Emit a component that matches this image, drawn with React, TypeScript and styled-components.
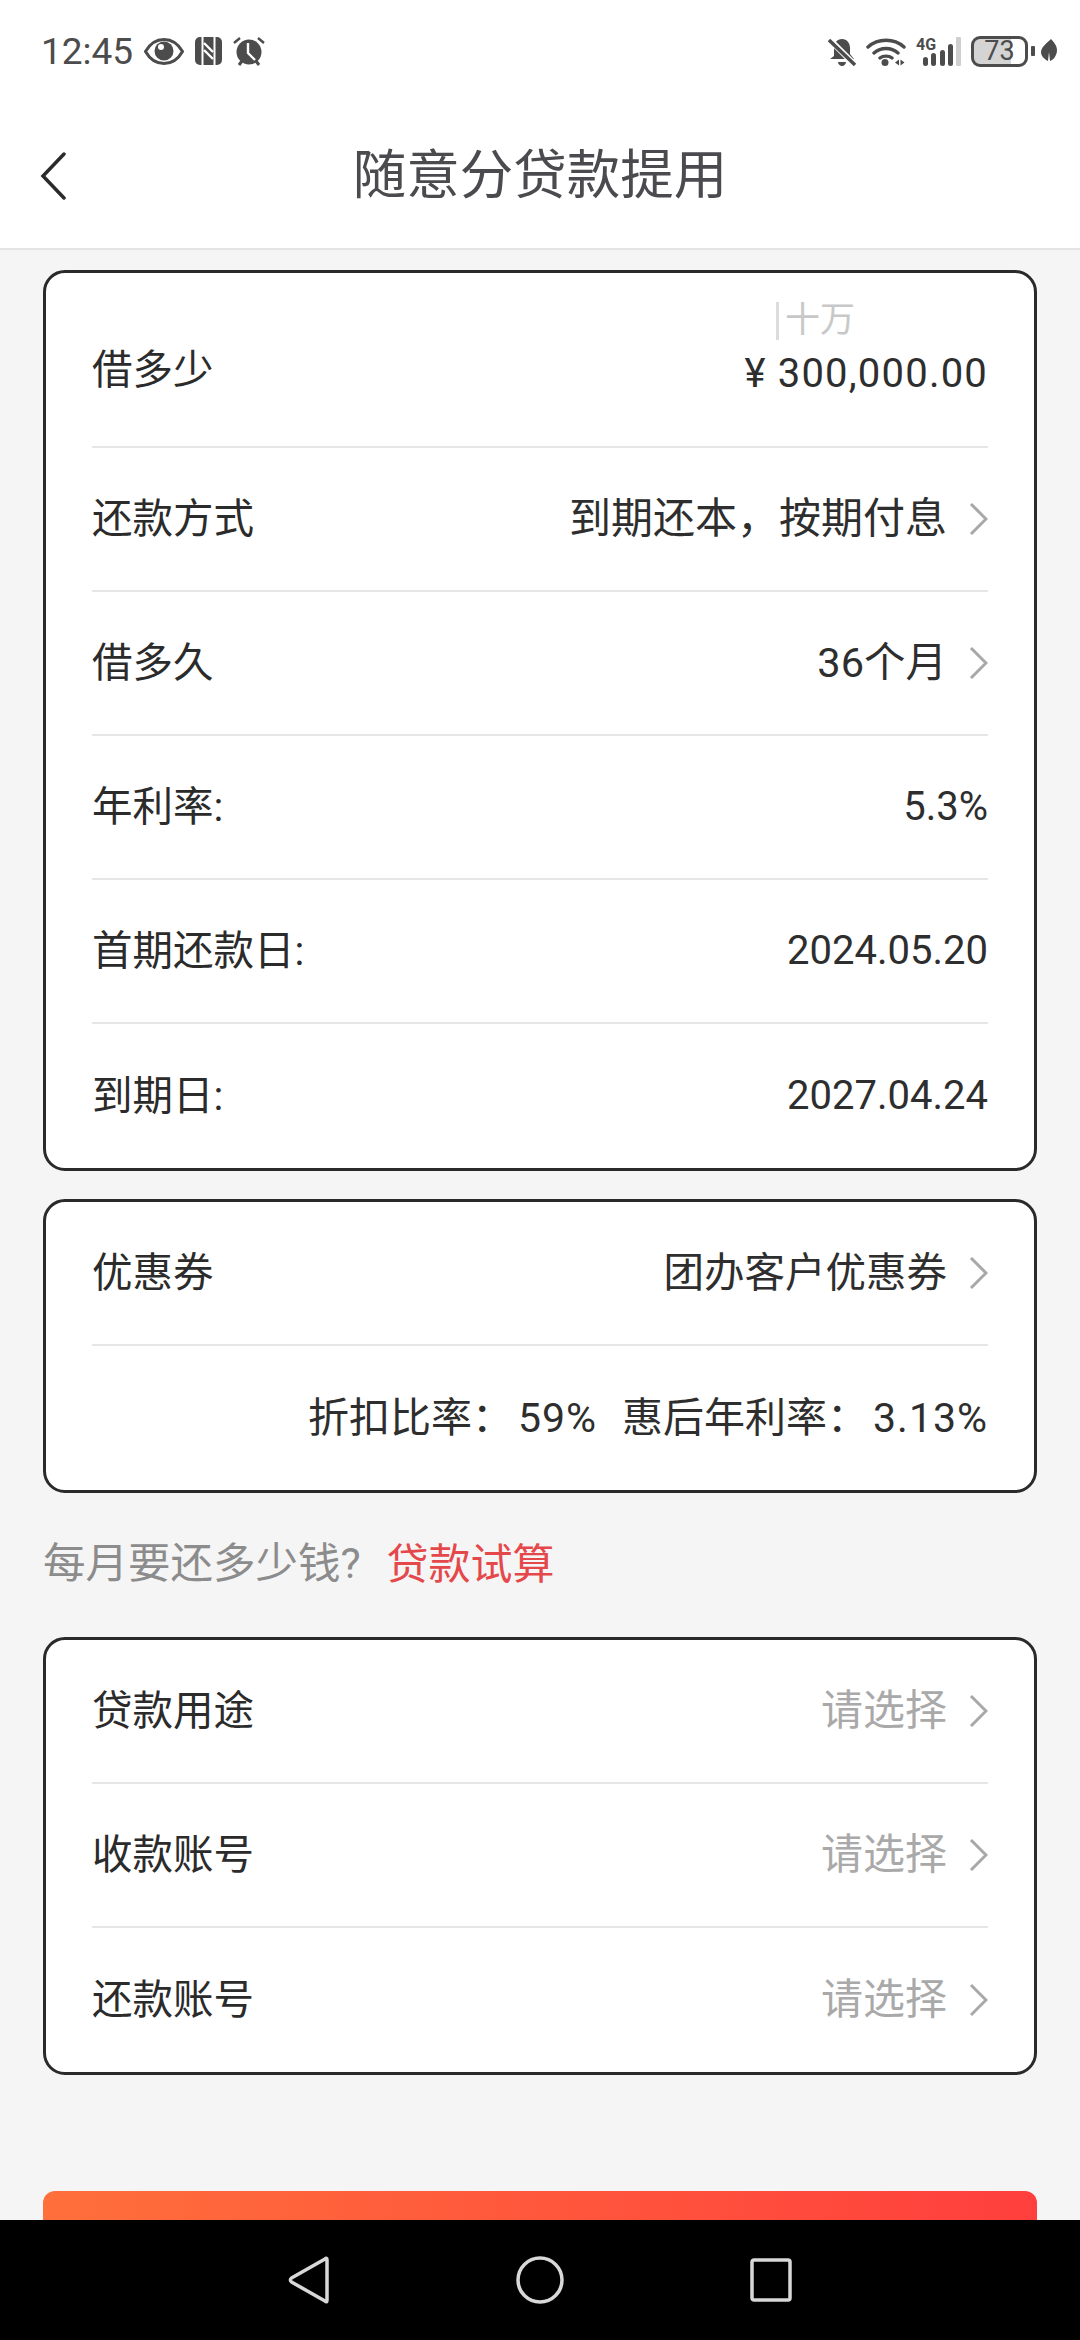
import React from "react";
import styled, { createGlobalStyle } from "styled-components";

const GlobalStyle = createGlobalStyle`
  html, body {
    margin: 0;
    padding: 0;
    background: #f5f5f5;
  }
  * {
    box-sizing: border-box;
  }
`;

const Page = styled.div`
  width: 1080px;
  height: 2340px;
  display: flex;
  flex-direction: column;
  overflow: hidden;
  font-family: Roboto, "Noto Sans CJK SC", sans-serif;
  color: #2b2b2b;
`;

const Header = styled.header`
  flex: 0 0 250px;
  background: #fff;
  border-bottom: 2px solid #e4e4e4;
`;

const StatusBar = styled.div`
  height: 100px;
  padding: 2px 23px 0 41px;
  display: flex;
  align-items: center;
  justify-content: space-between;
  color: #4c4c4c;
`;

const StatusGroup = styled.div`
  display: flex;
  align-items: center;
  gap: ${(p: { $gap: number }) => p.$gap}px;
`;

const Clock = styled.span`
  font-size: 37px;
  line-height: 1;
`;

const Battery = styled.div`
  width: 57px;
  height: 31px;
  border: 3px solid #4c4c4c;
  border-radius: 9px;
  background: linear-gradient(90deg, #d4d4d4 73%, #fff 73%);
  display: flex;
  align-items: center;
  justify-content: center;
  font-size: 27px;
  line-height: 1;
`;

const TitleBar = styled.div`
  height: 148px;
  padding-top: 3px;
  position: relative;
  display: flex;
  align-items: center;
  justify-content: center;
`;

const BackIcon = styled.svg`
  position: absolute;
  left: 40px;
  top: 52px;
`;

const Title = styled.h1`
  margin: 0;
  font-size: 53.5px;
  font-weight: 400;
  color: #4a4a4f;
  line-height: 1;
`;

const Content = styled.main`
  flex: 1;
  min-height: 0;
  overflow: hidden;
  padding: 20px 43px 0;
`;

const Card = styled.section`
  background: #fff;
  border: 3px solid #2a2a2a;
  border-radius: 22px;
  padding: 0 46px;
  margin-bottom: 28px;
`;

const Row = styled.div<{ $height?: number }>`
  height: ${(p) => p.$height ?? 144}px;
  display: flex;
  align-items: center;
  justify-content: space-between;
  font-size: 40.5px;
  line-height: 1;
  border-bottom: 2px solid #e6e6e6;
  &:last-child {
    border-bottom: none;
  }
`;

const AmountRow = styled(Row)`
  align-items: flex-start;
`;

const AmountLabel = styled.span`
  margin-top: 77px;
`;

const Amount = styled.div`
  margin-top: 29px;
  display: flex;
  flex-direction: column;
  align-items: flex-end;
`;

const UnitHint = styled.div`
  height: 38px;
  margin-right: 133px;
  padding-left: 6px;
  border-left: 3px solid #dcdcdc;
  font-size: 35px;
  line-height: 38px;
  color: #c8c8c8;
`;

const AmountValue = styled.div`
  margin-top: 14px;
  font-size: 40px;
  letter-spacing: 1.2px;
  color: #2e2e2e;
`;

const YenSign = styled.span`
  margin-right: 11px;
`;

const Value = styled.span<{ $muted?: boolean; $size?: number }>`
  display: flex;
  align-items: center;
  gap: 22px;
  font-size: ${(p) => p.$size ?? 40}px;
  color: ${(p) => (p.$muted ? "#a9a9a9" : "#2e2e2e")};
`;

const DiscountRow = styled(Row)`
  justify-content: flex-end;
  gap: 25px;
  font-size: 41px;
  color: #2e2e2e;
`;

const WideColon = styled.span`
  letter-spacing: 5px;
`;

const DiscountNumber = styled.span`
  letter-spacing: 1px;
`;

const Trial = styled.div`
  height: 83px;
  margin-top: 30px;
  margin-bottom: 31px;
  display: flex;
  align-items: center;
  gap: 26px;
  font-size: 42.5px;
  line-height: 1;
  color: #8c8c8c;
`;

const TrialLink = styled.a`
  color: #e5484a;
  font-size: 42px;
`;

const SubmitButton = styled.button`
  display: block;
  width: 100%;
  height: 120px;
  margin-top: 116px;
  border: none;
  border-radius: 12px;
  background: linear-gradient(92deg, #ff6f3b 0%, #ff3f3d 100%);
`;

const NavBar = styled.footer`
  flex: 0 0 120px;
  background: #000;
  display: flex;
  align-items: center;
  justify-content: center;
  gap: 186px;
`;

const Chevron = () => (
  <svg width="19" height="34" viewBox="0 0 19 34" fill="none">
    <path d="M2 2l15 15L2 32" stroke="#a8a8a8" strokeWidth="3" />
  </svg>
);

const EyeIcon = () => (
  <svg width="40" height="27" viewBox="0 0 40 27">
    <path d="M1.500 13.500C6 5.500 12.500 1.500 20 1.500s14 4 18.500 12C34 21.500 27.500 25.500 20 25.500S6 21.500 1.500 13.500z" fill="none" stroke="#4c4c4c" strokeWidth="3" />
    <circle cx="20" cy="13" r="9.500" fill="#4c4c4c" />
    <circle cx="17" cy="9" r="3" fill="#fff" />
  </svg>
);

const NfcIcon = () => (
  <svg width="27" height="28" viewBox="0 0 27 28">
    <rect width="27" height="28" rx="5" fill="#4c4c4c" />
    <path d="M7.500 0v28M19.500 0v28" stroke="#fff" strokeWidth="2" />
    <path d="M9 6l9 9M9 13l9 9" stroke="#fff" strokeWidth="2.400" />
  </svg>
);

const AlarmIcon = () => (
  <svg width="32" height="30" viewBox="0 0 32 30">
    <circle cx="16" cy="16" r="12.500" fill="#4c4c4c" />
    <path d="M15 7v10l7 7" fill="none" stroke="#fff" strokeWidth="2.400" />
    <path d="M1 7l6-5M31 7l-6-5" stroke="#4c4c4c" strokeWidth="2.400" />
    <path d="M6 29l3-4M26 29l-3-4" stroke="#4c4c4c" strokeWidth="3" />
  </svg>
);

const BellOffIcon = () => (
  <svg width="28" height="29" viewBox="0 0 28 29">
    <path d="M14 2c5 0 8 4 8 9v6l4 5H2l4-3V11c0-5 3-9 8-9z" fill="#4c4c4c" />
    <path d="M10 25h8c0 2-2 4-4 4s-4-2-4-4z" fill="#4c4c4c" />
    <path d="M0 1l27 27" stroke="#fff" strokeWidth="6" />
    <path d="M1 3l26 25" stroke="#4c4c4c" strokeWidth="3.400" />
  </svg>
);

const WifiIcon = () => (
  <svg width="40" height="29" viewBox="0 0 40 29">
    <path d="M2 10c10-9 26-9 36 0M8 16c7-6 17-6 24 0M14 21c3-2.500 9-2.500 12 0" fill="none" stroke="#4c4c4c" strokeWidth="3.400" strokeLinecap="round" />
    <circle cx="19" cy="25.500" r="3.500" fill="#4c4c4c" />
    <path d="M29 25.500l4-3v6zM34.500 22.500l4 3-4 3z" fill="#4c4c4c" />
  </svg>
);

const SignalIcon = () => (
  <svg width="45" height="30" viewBox="0 0 45 30">
    <rect x="7" y="21" width="5" height="9" rx="2.500" fill="#4c4c4c" />
    <rect x="15" y="17" width="5" height="13" rx="2.500" fill="#4c4c4c" />
    <rect x="24" y="14" width="5" height="16" rx="2.500" fill="#4c4c4c" />
    <rect x="32" y="8" width="5" height="22" rx="2.500" fill="#4c4c4c" />
    <rect x="40" y="1" width="5" height="29" rx="1" fill="#cfcfcf" />
    <text x="0" y="14" fontSize="16" fontWeight="700" fontFamily="Roboto, sans-serif" fill="#4c4c4c">4G</text>
  </svg>
);

const BatteryNub = () => (
  <svg width="7" height="10" viewBox="0 0 7 10">
    <rect width="4" height="10" rx="1" fill="#4c4c4c" />
  </svg>
);

const LeafIcon = () => (
  <svg width="16" height="25" viewBox="0 0 16 25">
    <path d="M10 0c3 3 6 7 6 11 0 6-4 10-7 11L8 13 7 22c-4-2-7-5-7-9C0 8 6 4 10 0z" fill="#4c4c4c" />
  </svg>
);

const NavBack = () => (
  <svg width="42" height="48" viewBox="0 0 42 48" fill="none">
    <path d="M39 3.500c0-1.500-1-1.500-2-.5L3.500 22c-1.500 1.200-1.500 2.800 0 4L37 45c1 1 2 1 2-.5z" stroke="#d8d8d8" strokeWidth="3.500" strokeLinejoin="round" />
  </svg>
);

const NavHome = () => (
  <svg width="48" height="48" viewBox="0 0 48 48" fill="none">
    <circle cx="24" cy="24" r="22" stroke="#d8d8d8" strokeWidth="3.500" />
  </svg>
);

const NavRecent = () => (
  <svg width="42" height="44" viewBox="0 0 42 44" fill="none">
    <rect x="2" y="2" width="38" height="40" rx="2" stroke="#d8d8d8" strokeWidth="3.500" />
  </svg>
);

const App: React.FC = () => {
  return (
    <Page>
      <GlobalStyle />
      <Header>
        <StatusBar>
          <StatusGroup $gap={11}>
            <Clock>12:45</Clock>
            <EyeIcon />
            <NfcIcon />
            <AlarmIcon />
          </StatusGroup>
          <StatusGroup $gap={10}>
            <BellOffIcon />
            <WifiIcon />
            <SignalIcon />
            <StatusGroup $gap={3}>
              <Battery>73</Battery>
              <BatteryNub />
              <LeafIcon />
            </StatusGroup>
          </StatusGroup>
        </StatusBar>
        <TitleBar>
          <BackIcon width="26" height="48" viewBox="0 0 26 48" fill="none">
            <path d="M24 2L3 24l21 22" stroke="#2b2b2b" strokeWidth="3.500" strokeLinecap="round" />
          </BackIcon>
          <Title>随意分贷款提用</Title>
        </TitleBar>
      </Header>
      <Content>
        <Card>
          <AmountRow $height={175}>
            <AmountLabel>借多少</AmountLabel>
            <Amount>
              <UnitHint>十万</UnitHint>
              <AmountValue><YenSign>¥</YenSign>300,000.00</AmountValue>
            </Amount>
          </AmountRow>
          <Row>
            <span>还款方式</span>
            <Value $size={42}>到期还本，按期付息<Chevron /></Value>
          </Row>
          <Row>
            <span>借多久</span>
            <Value $size={41.5}>36个月<Chevron /></Value>
          </Row>
          <Row>
            <span>年利率:</span>
            <Value>5.3%</Value>
          </Row>
          <Row>
            <span>首期还款日:</span>
            <Value>2024.05.20</Value>
          </Row>
          <Row>
            <span>到期日:</span>
            <Value>2027.04.24</Value>
          </Row>
        </Card>
        <Card>
          <Row>
            <span>优惠券</span>
            <Value $size={40.5}>团办客户优惠券<Chevron /></Value>
          </Row>
          <DiscountRow>
            <span>折扣比率<WideColon>：</WideColon><DiscountNumber>59%</DiscountNumber></span>
            <span>惠后年利率<WideColon>：</WideColon><DiscountNumber>3.13%</DiscountNumber></span>
          </DiscountRow>
        </Card>
        <Trial>
          <span>每月要还多少钱?</span>
          <TrialLink>贷款试算</TrialLink>
        </Trial>
        <Card>
          <Row>
            <span>贷款用途</span>
            <Value $muted $size={42}>请选择<Chevron /></Value>
          </Row>
          <Row>
            <span>收款账号</span>
            <Value $muted $size={42}>请选择<Chevron /></Value>
          </Row>
          <Row>
            <span>还款账号</span>
            <Value $muted $size={42}>请选择<Chevron /></Value>
          </Row>
        </Card>
        <SubmitButton />
      </Content>
      <NavBar>
        <NavBack />
        <NavHome />
        <NavRecent />
      </NavBar>
    </Page>
  );
};

export default App;
